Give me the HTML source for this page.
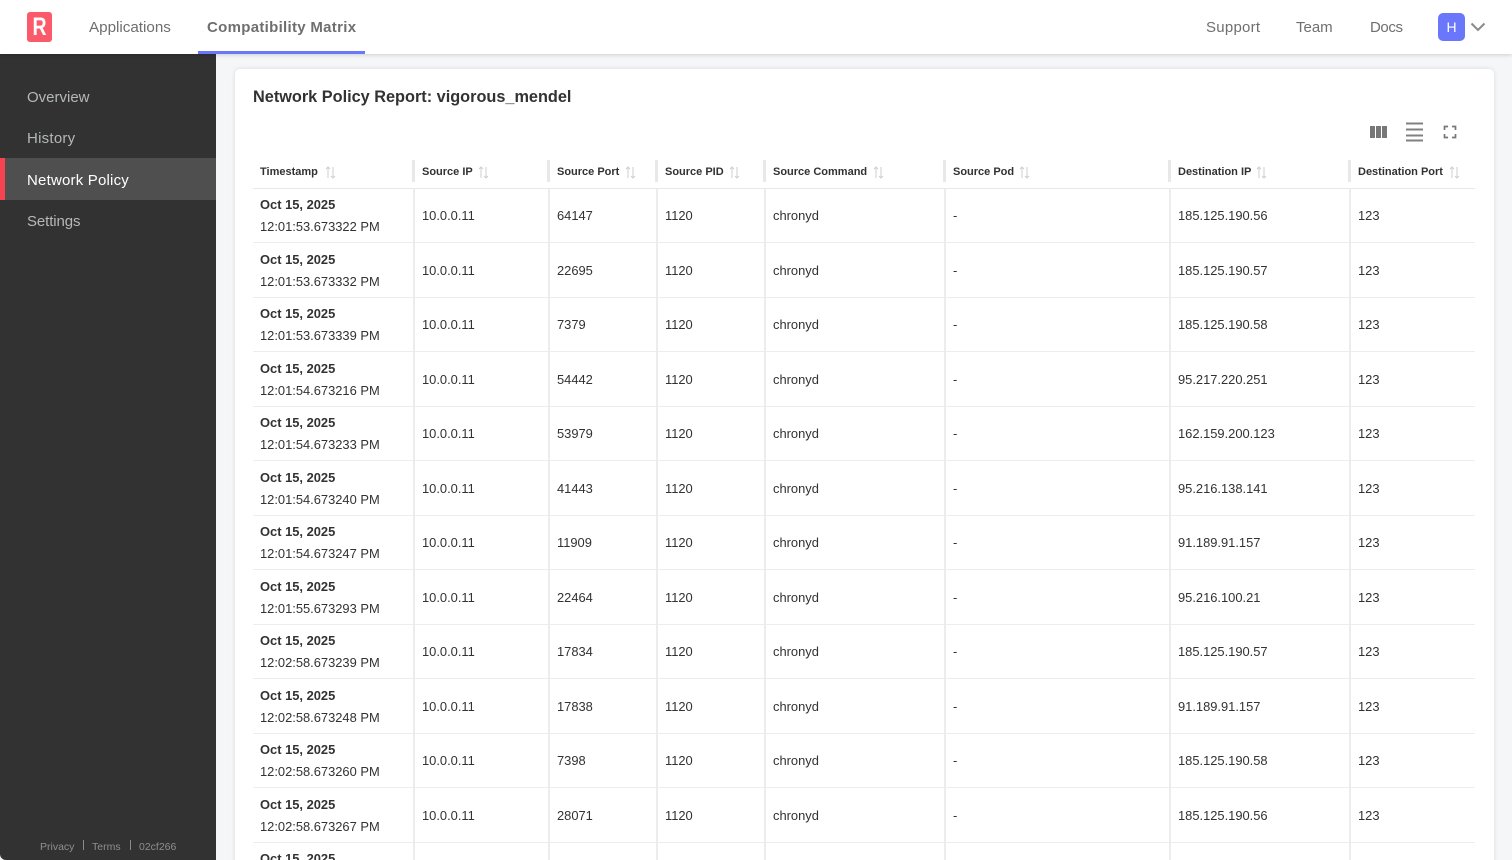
<!DOCTYPE html>
<html><head><meta charset="utf-8"><title>Network Policy</title>
<style>
*{box-sizing:border-box}
html,body{margin:0;padding:0;width:1512px;height:860px;overflow:hidden;background:#f5f6f8;font-family:"Liberation Sans",sans-serif}
.page{position:relative;width:1512px;height:860px;overflow:hidden;background:#f5f6f8}
.top{position:absolute;left:0;top:0;width:1512px;height:54px;background:#fff;box-shadow:0 1px 4px rgba(0,0,0,.16);z-index:5}
.top span{position:absolute;top:18px;font-size:15px;line-height:19px;color:#6f6f6f;white-space:nowrap}
.logo{position:absolute;left:27px;top:12px;width:25px;height:30px;background:#fa5a69;border-radius:3px;color:#fff;font-weight:700;font-size:25px;line-height:30px;text-align:center}
.logo em{display:block;font-style:normal;transform:scaleX(.78)}
.ul{position:absolute;left:198px;top:51px;width:167px;height:3px;background:#6a77fb}
.av{position:absolute;left:1438px;top:13px;width:27px;height:28px;background:#6a77fb;border-radius:5px;color:#fff;font-size:14px;line-height:28px;text-align:center}
.side{position:absolute;left:0;top:54px;width:216px;height:806px;background:#323232;border-bottom-left-radius:6px}
.side div{position:absolute;left:27px;font-size:15px;line-height:20px;color:#b5b8b8;white-space:nowrap}
.act{position:absolute;left:0;top:104px;width:216px;height:42px;background:#4f4f4f;border-left:5px solid #f7434f}
.side .ft{font-size:10.5px;color:#8f8f8f;line-height:14px;top:786px}
.sep{position:absolute;width:1px;height:10px;background:#8a8a8a;top:786px}
.card{position:absolute;left:235px;top:69px;width:1259px;height:830px;background:#fff;border-radius:5px;box-shadow:0 0 4px rgba(0,0,0,.12)}
h1{position:absolute;left:253px;top:87px;margin:0;font-size:16.3px;line-height:20px;font-weight:700;color:#323232;white-space:nowrap}
.t{position:absolute;left:253px;top:154px;width:1222px}
.h{position:relative;height:35px;margin-bottom:-.5px;border-bottom:1px solid #e8e8e8}
.h b{position:absolute;top:11px;font-size:11px;line-height:14px;color:#323232;white-space:nowrap}
.h u{position:absolute;top:6px;width:3px;height:22px;margin-left:-1px;background:#e8e8e8}
.h svg{position:absolute;top:12px}
.r{position:relative;height:54.5px;border-bottom:1px solid #ededed}
.r b{position:absolute;left:7px;top:7.5px;font-size:12.9px;line-height:17px;color:#323232;white-space:nowrap;font-weight:700}
.r i{position:absolute;left:7px;top:29.5px;font-style:normal;font-size:12.9px;line-height:17px;color:#323232;white-space:nowrap}
.r span{position:absolute;top:18.5px;font-size:12.9px;line-height:17px;color:#323232;white-space:nowrap}
.r u{position:absolute;top:0;width:2px;height:54.5px;background:#ececec}
.c1{left:169px}.c2{left:304px}.c3{left:412px}.c4{left:520px}.c5{left:700px}.c6{left:925px}.c7{left:1105px}
.l1{left:160px}.l2{left:295px}.l3{left:403px}.l4{left:511px}.l5{left:691px}.l6{left:916px}.l7{left:1096px}
</style></head><body>
<div class="page">
<div class="top">
<div class="logo"><em>R</em></div>
<span style="left:89px;font-size:15.2px">Applications</span>
<span style="left:207px;font-weight:700;letter-spacing:.3px">Compatibility Matrix</span>
<div class="ul"></div>
<span style="left:1206px;letter-spacing:.25px">Support</span>
<span style="left:1296px">Team</span>
<span style="left:1370px;letter-spacing:-.4px">Docs</span>
<div class="av">H</div>
<svg style="position:absolute;left:1470px;top:22px" width="16" height="10" viewBox="0 0 16 10"><path d="M1.5 1.5L8 8L14.5 1.5" fill="none" stroke="#8a8a8a" stroke-width="2"/></svg>
</div>
<div class="side">
<div style="top:34px">Overview</div>
<div style="top:75px;letter-spacing:.25px">History</div>
<span class="act"></span>
<div style="top:117px;color:#fff;letter-spacing:.2px">Network Policy</div>
<div style="top:158px;letter-spacing:-.1px">Settings</div>
<div class="ft" style="left:40px">Privacy</div><span class="sep" style="left:83px"></span>
<div class="ft" style="left:92px">Terms</div><span class="sep" style="left:130px"></span>
<div class="ft" style="left:139px">02cf266</div>
</div>
<div class="card"></div>
<h1>Network Policy Report: vigorous_mendel</h1>
<svg style="position:absolute;left:1370px;top:122px" width="95" height="20" viewBox="0 0 95 20">
<path d="M0 4h5v12H0zM6 4h5v12H6zM12 4h5v12h-5z" fill="#777"/>
<path d="M36 1.500h17M36 7.500h17M36 13.500h17M36 18.500h17" stroke="#808080" stroke-width="2" fill="none"/>
<path d="M74.500 8V4.500H78M82 4.500h3.500V8M85.500 12v3.500H82M78 15.500h-3.500V12" stroke="#777" stroke-width="1.700" fill="none"/>
</svg>
<div class="t">
<div class="h">
<b style="left:7px">Timestamp</b><svg style="left:72px" width="12" height="13" viewBox="0 0 12 13"><path d="M3 12V1M1 3l2-2 2 2M8 1v11M6 10l2 2 2-2" fill="none" stroke="#cfcfcf"/></svg>
<u class="l1"></u><b class="c1">Source IP</b><svg style="left:225px" width="12" height="13" viewBox="0 0 12 13"><path d="M3 12V1M1 3l2-2 2 2M8 1v11M6 10l2 2 2-2" fill="none" stroke="#cfcfcf"/></svg>
<u class="l2"></u><b class="c2">Source Port</b><svg style="left:372px" width="12" height="13" viewBox="0 0 12 13"><path d="M3 12V1M1 3l2-2 2 2M8 1v11M6 10l2 2 2-2" fill="none" stroke="#cfcfcf"/></svg>
<u class="l3"></u><b class="c3">Source PID</b><svg style="left:476px" width="12" height="13" viewBox="0 0 12 13"><path d="M3 12V1M1 3l2-2 2 2M8 1v11M6 10l2 2 2-2" fill="none" stroke="#cfcfcf"/></svg>
<u class="l4"></u><b class="c4">Source Command</b><svg style="left:620px" width="12" height="13" viewBox="0 0 12 13"><path d="M3 12V1M1 3l2-2 2 2M8 1v11M6 10l2 2 2-2" fill="none" stroke="#cfcfcf"/></svg>
<u class="l5"></u><b class="c5">Source Pod</b><svg style="left:766px" width="12" height="13" viewBox="0 0 12 13"><path d="M3 12V1M1 3l2-2 2 2M8 1v11M6 10l2 2 2-2" fill="none" stroke="#cfcfcf"/></svg>
<u class="l6"></u><b class="c6">Destination IP</b><svg style="left:1003px" width="12" height="13" viewBox="0 0 12 13"><path d="M3 12V1M1 3l2-2 2 2M8 1v11M6 10l2 2 2-2" fill="none" stroke="#cfcfcf"/></svg>
<u class="l7"></u><b class="c7">Destination Port</b><svg style="left:1196px" width="12" height="13" viewBox="0 0 12 13"><path d="M3 12V1M1 3l2-2 2 2M8 1v11M6 10l2 2 2-2" fill="none" stroke="#cfcfcf"/></svg>
</div>
<div class="r"><b>Oct 15, 2025</b><i>12:01:53.673322 PM</i><u class="l1"></u><span class="c1">10.0.0.11</span><u class="l2"></u><span class="c2">64147</span><u class="l3"></u><span class="c3">1120</span><u class="l4"></u><span class="c4">chronyd</span><u class="l5"></u><span class="c5">-</span><u class="l6"></u><span class="c6">185.125.190.56</span><u class="l7"></u><span class="c7">123</span></div>
<div class="r"><b>Oct 15, 2025</b><i>12:01:53.673332 PM</i><u class="l1"></u><span class="c1">10.0.0.11</span><u class="l2"></u><span class="c2">22695</span><u class="l3"></u><span class="c3">1120</span><u class="l4"></u><span class="c4">chronyd</span><u class="l5"></u><span class="c5">-</span><u class="l6"></u><span class="c6">185.125.190.57</span><u class="l7"></u><span class="c7">123</span></div>
<div class="r"><b>Oct 15, 2025</b><i>12:01:53.673339 PM</i><u class="l1"></u><span class="c1">10.0.0.11</span><u class="l2"></u><span class="c2">7379</span><u class="l3"></u><span class="c3">1120</span><u class="l4"></u><span class="c4">chronyd</span><u class="l5"></u><span class="c5">-</span><u class="l6"></u><span class="c6">185.125.190.58</span><u class="l7"></u><span class="c7">123</span></div>
<div class="r"><b>Oct 15, 2025</b><i>12:01:54.673216 PM</i><u class="l1"></u><span class="c1">10.0.0.11</span><u class="l2"></u><span class="c2">54442</span><u class="l3"></u><span class="c3">1120</span><u class="l4"></u><span class="c4">chronyd</span><u class="l5"></u><span class="c5">-</span><u class="l6"></u><span class="c6">95.217.220.251</span><u class="l7"></u><span class="c7">123</span></div>
<div class="r"><b>Oct 15, 2025</b><i>12:01:54.673233 PM</i><u class="l1"></u><span class="c1">10.0.0.11</span><u class="l2"></u><span class="c2">53979</span><u class="l3"></u><span class="c3">1120</span><u class="l4"></u><span class="c4">chronyd</span><u class="l5"></u><span class="c5">-</span><u class="l6"></u><span class="c6">162.159.200.123</span><u class="l7"></u><span class="c7">123</span></div>
<div class="r"><b>Oct 15, 2025</b><i>12:01:54.673240 PM</i><u class="l1"></u><span class="c1">10.0.0.11</span><u class="l2"></u><span class="c2">41443</span><u class="l3"></u><span class="c3">1120</span><u class="l4"></u><span class="c4">chronyd</span><u class="l5"></u><span class="c5">-</span><u class="l6"></u><span class="c6">95.216.138.141</span><u class="l7"></u><span class="c7">123</span></div>
<div class="r"><b>Oct 15, 2025</b><i>12:01:54.673247 PM</i><u class="l1"></u><span class="c1">10.0.0.11</span><u class="l2"></u><span class="c2">11909</span><u class="l3"></u><span class="c3">1120</span><u class="l4"></u><span class="c4">chronyd</span><u class="l5"></u><span class="c5">-</span><u class="l6"></u><span class="c6">91.189.91.157</span><u class="l7"></u><span class="c7">123</span></div>
<div class="r"><b>Oct 15, 2025</b><i>12:01:55.673293 PM</i><u class="l1"></u><span class="c1">10.0.0.11</span><u class="l2"></u><span class="c2">22464</span><u class="l3"></u><span class="c3">1120</span><u class="l4"></u><span class="c4">chronyd</span><u class="l5"></u><span class="c5">-</span><u class="l6"></u><span class="c6">95.216.100.21</span><u class="l7"></u><span class="c7">123</span></div>
<div class="r"><b>Oct 15, 2025</b><i>12:02:58.673239 PM</i><u class="l1"></u><span class="c1">10.0.0.11</span><u class="l2"></u><span class="c2">17834</span><u class="l3"></u><span class="c3">1120</span><u class="l4"></u><span class="c4">chronyd</span><u class="l5"></u><span class="c5">-</span><u class="l6"></u><span class="c6">185.125.190.57</span><u class="l7"></u><span class="c7">123</span></div>
<div class="r"><b>Oct 15, 2025</b><i>12:02:58.673248 PM</i><u class="l1"></u><span class="c1">10.0.0.11</span><u class="l2"></u><span class="c2">17838</span><u class="l3"></u><span class="c3">1120</span><u class="l4"></u><span class="c4">chronyd</span><u class="l5"></u><span class="c5">-</span><u class="l6"></u><span class="c6">91.189.91.157</span><u class="l7"></u><span class="c7">123</span></div>
<div class="r"><b>Oct 15, 2025</b><i>12:02:58.673260 PM</i><u class="l1"></u><span class="c1">10.0.0.11</span><u class="l2"></u><span class="c2">7398</span><u class="l3"></u><span class="c3">1120</span><u class="l4"></u><span class="c4">chronyd</span><u class="l5"></u><span class="c5">-</span><u class="l6"></u><span class="c6">185.125.190.58</span><u class="l7"></u><span class="c7">123</span></div>
<div class="r"><b>Oct 15, 2025</b><i>12:02:58.673267 PM</i><u class="l1"></u><span class="c1">10.0.0.11</span><u class="l2"></u><span class="c2">28071</span><u class="l3"></u><span class="c3">1120</span><u class="l4"></u><span class="c4">chronyd</span><u class="l5"></u><span class="c5">-</span><u class="l6"></u><span class="c6">185.125.190.56</span><u class="l7"></u><span class="c7">123</span></div>
<div class="r"><b>Oct 15, 2025</b><u class="l1"></u><u class="l2"></u><u class="l3"></u><u class="l4"></u><u class="l5"></u><u class="l6"></u><u class="l7"></u></div>
</div>
</div>
</body></html>
